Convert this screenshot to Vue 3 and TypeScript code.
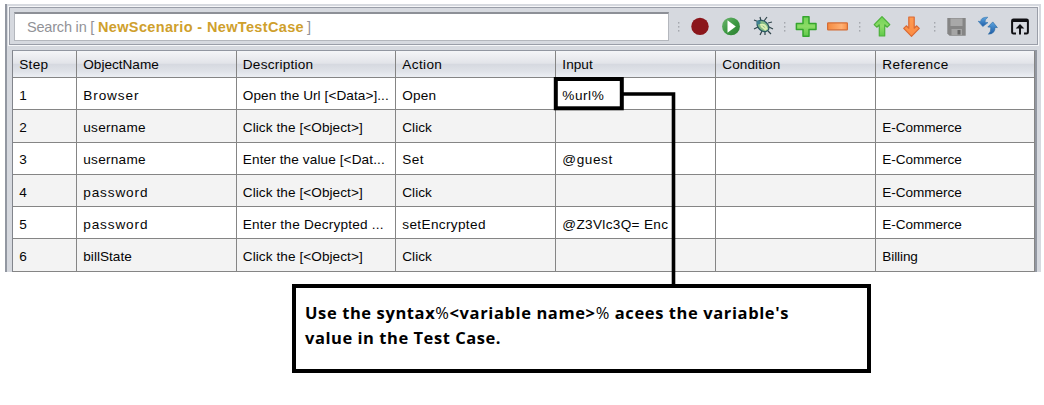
<script setup lang="ts">
import type { Directive } from 'vue'

interface Cell { t: string; w?: number }

// Spreads a label's characters so that it takes the given width.
const vFit: Directive<HTMLElement, number | undefined> = {
  mounted(el, { value }) {
    if (!value) return
    const n = (el.textContent ?? '').length
    el.style.letterSpacing = `${(value - el.getBoundingClientRect().width) / n}px`
  },
}

const c = (t: string, w?: number): Cell => ({ t, w })
const head: Cell[] = [c('Step', 29), c('ObjectName', 75.5), c('Description', 70.5), c('Action', 40), c('Input', 30.5), c('Condition', 58), c('Reference', 66.5)]
const click = c('Click the [<Object>]', 120)
const rows: Cell[][] = [
  [c('1'), c('Browser', 56), c('Open the Url [<Data>]...', 146), c('Open', 34), c('%url%', 42), c(''), c('')],
  [c('2'), c('username', 62.5), click, c('Click', 29.5), c(''), c(''), c('E-Commerce', 79.5)],
  [c('3'), c('username', 62.5), c('Enter the value [<Dat...', 142), c('Set', 21.5), c('@guest', 50.5), c(''), c('E-Commerce', 79.5)],
  [c('4'), c('password', 65), click, c('Click', 29.5), c(''), c(''), c('E-Commerce', 79.5)],
  [c('5'), c('password', 65), c('Enter the Decrypted ...', 141), c('setEncrypted', 83.5), c('@Z3Vlc3Q= Enc', 106), c(''), c('E-Commerce', 79.5)],
  [c('6'), c('billState', 48.5), click, c('Click', 29.5), c(''), c(''), c('Billing', 35.5)],
]
</script>

<template>
  <div class="stage">
    <div class="panel">
      <div class="toolbar">
        <div class="search">
          <span v-fit="71" class="pre">Search in [ </span><b v-fit="206">NewScenario - NewTestCase</b><span class="post">]</span>
        </div>
        <svg class="icons" width="369" height="36" viewBox="669 8 369 36">
          <defs>
            <linearGradient id="gr" x1="0" y1="0" x2="1" y2="1"><stop offset="0" stop-color="#72b572" /><stop offset=".5" stop-color="#3d9a43" /><stop offset="1" stop-color="#2c7d30" /></linearGradient>
            <linearGradient id="pl" x1="0" y1="0" x2="0" y2="1"><stop offset="0" stop-color="#72d455" /><stop offset=".5" stop-color="#8cdb66" /><stop offset="1" stop-color="#5fc94a" /></linearGradient>
            <linearGradient id="or" x1="0" y1="0" x2="0" y2="1"><stop offset="0" stop-color="#ff9a52" /><stop offset="1" stop-color="#fb8c42" /></linearGradient>
            <linearGradient id="mi" x1="0" y1="0" x2="1" y2="0"><stop offset="0" stop-color="#f58a3f" /><stop offset=".7" stop-color="#ffb072" /><stop offset="1" stop-color="#f9914a" /></linearGradient>
            <linearGradient id="bl" x1="0" y1="0" x2="0" y2="1"><stop offset="0" stop-color="#5ea6e0" /><stop offset="1" stop-color="#1d5ba6" /></linearGradient>
          </defs>
          <g fill="#a5a8ae">
            <template v-for="x in [678, 784, 859, 934]" :key="x">
              <rect v-for="y in [22, 26, 30]" :key="y" :x="x" :y="y" width="1.4" height="1.6" />
            </template>
          </g>
          <circle cx="700" cy="26.4" r="8.7" fill="#8b161b" />
          <circle cx="731" cy="26.4" r="8.9" fill="url(#gr)" />
          <path d="M727.5 20.2L735.8 26.4L727.5 32.7Z" fill="#fff" />
          <g transform="translate(763 26)">
            <path d="M-4-4L-9-6M-2-5L-3-9M1-5L4-9M5-3L9-4M6 1L10 3M5 5L8 8M-1 5L-3 9M-5 1L-9 3M2 6L2 9" fill="none" stroke="#30454b" stroke-width="1.2" />
            <ellipse cx="0" cy="0" rx="6.6" ry="4.8" transform="rotate(42)" fill="#82b985" stroke="#285963" stroke-width="1.3" />
            <path d="M-3-1Q2-3 4 3.5M-2 0L3 4" stroke="#dcefb3" fill="none" stroke-width="1.8" />
            <circle cx="-4.5" cy="-3.6" r="2.1" fill="#3e8090" />
          </g>
          <path d="M803 16.8h6v6.7h7v6h-7v6.7h-6v-6.7h-6.6v-6h6.6z" fill="url(#pl)" stroke="#35a52e" stroke-width="1.5" stroke-linejoin="round" />
          <rect x="827.6" y="22.9" width="19.8" height="6.9" rx=".6" fill="url(#mi)" stroke="#d46c35" stroke-width="1.2" />
          <path d="M882 16.6L889.8 24.6L887.2 27.2L884.7 24.8V36H879.3V24.8L876.8 27.2L874.2 24.6Z" fill="url(#pl)" stroke="#4db13b" stroke-width="1.2" stroke-linejoin="round" />
          <path d="M911.5 36.4L919.3 28.4L916.7 25.8L914.2 28.2V17H908.8V28.2L906.3 25.8L903.7 28.4Z" fill="url(#or)" stroke="#d96a35" stroke-width="1.2" stroke-linejoin="round" />
          <path d="M947.3 18H965.7V35.8H949.5L947.3 33.6Z" fill="#858585" />
          <path d="M950.5 18.5H962.5V26H950.5Z" fill="#a8a8a8" />
          <path d="M951.5 29H962V35H951.5Z" fill="#a5a5a5" /><path d="M957.5 30h3v4.5h-3z" fill="#666" />
          <path d="M987.8 17.2Q980.8 17 980.6 21.6L978.2 21.2L982.8 26.6L988 22.6L985 22.2Q984.8 19.4 987.8 17.2Z" fill="url(#bl)" stroke="#3474ae" stroke-width=".6" />
          <path d="M988.4 34.2Q995.3 33.8 995 27.4L997.4 27.6L992.8 21.9L987.8 27L990.8 27.2Q991.3 31.6 988.4 34.2Z" fill="url(#bl)" stroke="#24649f" stroke-width=".6" />
          <path d="M1016 33.6H1013.5Q1012.1 33.6 1012.1 32.2V20.8Q1012.1 19.4 1013.5 19.4H1026.5Q1027.9 19.4 1027.9 20.8V32.2Q1027.9 33.6 1026.5 33.6H1024" fill="none" stroke="#101014" stroke-width="2" />
          <path d="M1012 19h16v3h-16zM1020 24l4.3 4.5h-3.3v6.1h-2v-6.1h-3.3z" fill="#101014" />
        </svg>
      </div>
      <div class="table">
        <div class="row head"><div v-for="h in head" :key="h.t" class="cell"><span v-fit="h.w">{{ h.t }}</span></div></div>
        <div v-for="(r, i) in rows" :key="i" class="row"><div v-for="(d, j) in r" :key="j" class="cell"><span v-fit="d.w">{{ d.t }}</span></div></div>
      </div>
    </div>
    <svg class="link" width="1044" height="405" viewBox="0 0 1044 405">
      <rect x="555.8" y="79" width="66" height="29.3" fill="none" stroke="#000" stroke-width="4" />
      <path d="M623 94H673.5V286" fill="none" stroke="#000" stroke-width="3.6" />
    </svg>
    <div class="note">
      <div><span v-fit="484">Use the syntax<i>%</i>&lt;variable name&gt;<i>%</i> acees the variable's</span></div>
      <div><span v-fit="196">value in the Test Case.</span></div>
    </div>
  </div>
</template>

<style>
body { background: #fff; }
</style>
<style scoped>
.stage { position: relative; width: 1044px; height: 405px; overflow: hidden; background: #fff; font: 13.6px/16px "Liberation Sans", Arial, sans-serif; color: #050505; white-space: pre; }
.stage * { box-sizing: border-box; }
.panel { margin: 4px 0 0 5px; width: 1036px; height: 268px; background: #d6d9df; border-left: 2px solid #9297a1; padding: 3px 0 0 2px; }
.toolbar { width: 1029px; height: 38px; border: 1px solid #9a9ea8; box-shadow: 0 0 0 1px #f6f7f9; display: flex; align-items: center; }
.search { width: 655px; height: 29px; margin-left: 4px; border: 1px solid #b4b7bd; border-top: 2px solid #8d9097; background: #fff; display: flex; align-items: center; padding: 1px 0 0 12px; color: #929297; flex: none; font-size: 14.5px; }
.search b { color: #cfa02c; }
.post { margin-left: 3px; }
.icons { display: block; flex: none; }
.table { margin: 5px 0 0 3px; width: 1025px; border-left: 1px solid #82858c; border-top: 1px solid #9297a1; border-right: 2px solid #9297a1; }
.row { display: grid; grid-template-columns: 64px 159.5px 159.5px 160px 160px 160px 159px; height: 32.3px; }
.row:nth-child(odd) { background: #f3f3f3; }
.row:nth-child(even) { background: #fff; }
.cell { border-right: 1px solid #858585; border-bottom: 1px solid #858585; padding: 4px 0 0 6.3px; display: flex; align-items: center; }
.row.head { height: 27px; background: linear-gradient(#f5f6f8 0%, #e2e4e9 45%, #d6d9e0 50%, #dfe2e8 75%, #eef1f6 100%); }
.head .cell { padding-top: 1px; }
.link { position: absolute; left: 0; top: 0; }
.note { position: absolute; left: 292px; top: 284px; width: 579px; height: 89px; border: 4px solid #000; background: #fff; padding: 13px 0 0 9px; font: 700 16.5px/24.6px "Open Sans", "Noto Sans", sans-serif; color: #000; }
.note i { font-style: normal; font-weight: 400; }
</style>
